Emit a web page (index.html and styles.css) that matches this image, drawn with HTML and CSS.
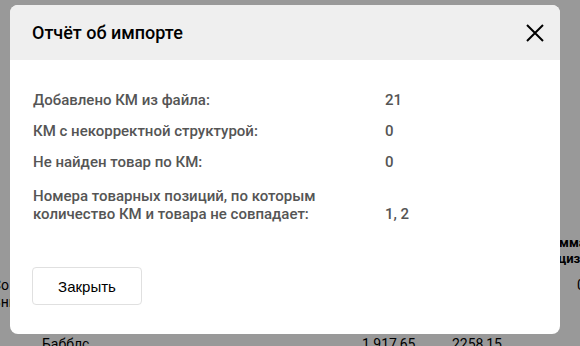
FILE: index.html
```html
<!DOCTYPE html>
<html lang="ru">
<head>
    <meta charset="UTF-8">
    <meta name="viewport" content="width=device-width, initial-scale=1.0">
    <title>Отчёт об импорте</title>
    <link rel="stylesheet" href="styles.css">
</head>
<body>

<!-- Страница под модальным окном -->
<div class="page">
    <table class="grid">
        <thead>
            <tr>
                <th class="col-name"></th>
                <th class="col-price"></th>
                <th class="col-total"></th>
                <th class="col-sum">Сумма<br>акциза</th>
            </tr>
        </thead>
        <tbody>
            <tr class="tall">
                <td class="col-name">Со<br>Вни</td>
                <td class="col-price"></td>
                <td class="col-total"></td>
                <td class="col-sum">0</td>
            </tr>
            <tr>
                <td class="col-name indent">Бабблс</td>
                <td class="col-price">1 917,65</td>
                <td class="col-total">2258,15</td>
                <td class="col-sum"></td>
            </tr>
        </tbody>
    </table>
</div>

<!-- Модальное окно -->
<div class="overlay">
    <div class="modal">
        <div class="modal-header">
            <h2>Отчёт об импорте</h2>
            <button class="close" type="button" aria-label="Закрыть">
                <svg width="18" height="18" viewBox="0 0 18 18">
                    <path d="M1 1L17 17M17 1L1 17" stroke="#000" stroke-width="2" fill="none"/>
                </svg>
            </button>
        </div>
        <div class="modal-body">
            <div class="report">
                <div class="label">Добавлено КМ из файла:</div>
                <div class="value">21</div>

                <div class="label">КМ с некорректной структурой:</div>
                <div class="value">0</div>

                <div class="label">Не найден товар по КМ:</div>
                <div class="value">0</div>

                <div class="label long">Номера товарных позиций, по которым<br>количество КМ и товара не совпадает:</div>
                <div class="value long">1, 2</div>
            </div>
            <button class="btn" type="button">Закрыть</button>
        </div>
    </div>
</div>

</body>
</html>
```

FILE: styles.css
```css
/* Общие стили */
html, body {
    height: 346px;
    overflow: hidden;
}

body {
    margin: 0;
    font-family: Roboto, "Liberation Sans", Arial, sans-serif;
    background: #fff;
    color: #000;
}

/* Страница под оверлеем */
.page {
    padding-top: 228px;
    margin-left: -8px;
    width: 588px;
    overflow: hidden;
}

.grid {
    border-collapse: collapse;
    table-layout: fixed;
    width: 644px;
    font-size: 14px;
    white-space: nowrap;
}

.grid th,
.grid td {
    box-sizing: border-box;
}

.grid th {
    font-size: 13px;
    font-weight: bold;
    text-align: left;
    height: 46px;
    line-height: 16px;
    padding: 0 8px;
}

.grid td {
    padding: 6px 8px;
    line-height: 17px;
    vertical-align: top;
}

.grid .tall td {
    padding-top: 3px;
    padding-bottom: 19px;
}

.col-name {
    width: 362px;
    padding-left: 0 !important;
}

.indent {
    padding-left: 50px !important;
}

.col-price {
    width: 90px;
}

.col-total {
    width: 82px;
}

.col-sum {
    width: 110px;
}

.grid th.col-sum {
    padding-left: 18px;
}

.grid td.col-sum {
    text-align: center;
}

/* Модальное окно */
.overlay {
    position: fixed;
    inset: 0;
    background: rgba(0, 0, 0, 0.4);
    display: flex;
    align-items: flex-start;
    padding: 5px 20px 0 10px;
}

.modal {
    width: 550px;
    background: #fff;
    border-radius: 8px;
    overflow: hidden;
}

.modal-header {
    background: #efefef;
    height: 55px;
    display: flex;
    align-items: center;
    justify-content: space-between;
    padding: 0 12px 0 22px;
}

.modal-header h2 {
    margin: 0;
    font-size: 18px;
    font-weight: 500;
    color: #000;
}

.close {
    border: none;
    background: none;
    padding: 4px;
    display: flex;
    cursor: pointer;
}

.modal-body {
    padding: 31px 22px 29px 23px;
}

.report {
    display: grid;
    grid-template-columns: 352px 1fr;
    row-gap: 13px;
    align-items: end;
    font-size: 15px;
    line-height: 18px;
    font-weight: 500;
    color: #555;
}

.report .long {
    margin-top: 3px;
}

.btn {
    margin-top: 44px;
    width: 110px;
    height: 38px;
    background: #fff;
    border: 1px solid #e0e0e0;
    border-radius: 4px;
    font-family: "Liberation Sans", Arial, sans-serif;
    font-size: 15px;
    color: #000;
    cursor: pointer;
    margin-left: -1px;
}
```
